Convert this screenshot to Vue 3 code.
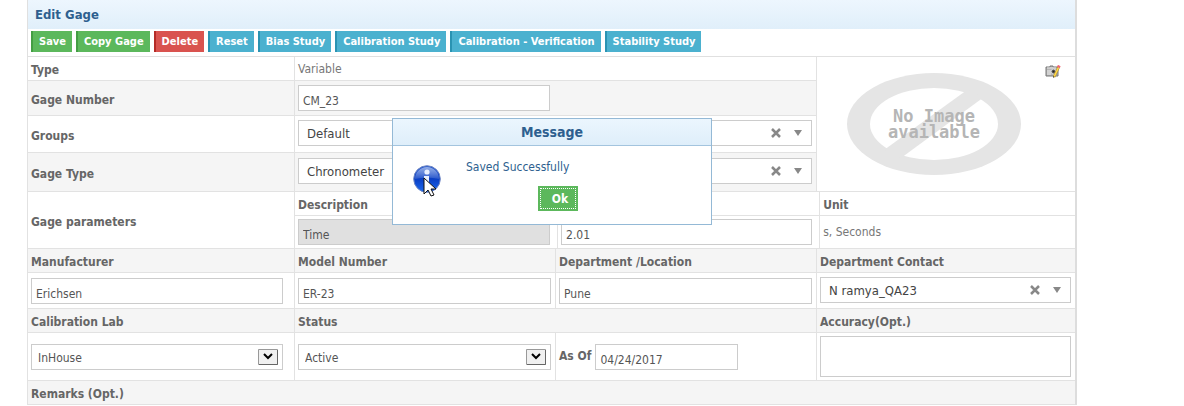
<script setup>
import { reactive, ref } from 'vue'

const actions = [
  { label: 'Save', kind: 'green' },
  { label: 'Copy Gage', kind: 'green' },
  { label: 'Delete', kind: 'red' },
  { label: 'Reset', kind: 'blue' },
  { label: 'Bias Study', kind: 'blue' },
  { label: 'Calibration Study', kind: 'blue' },
  { label: 'Calibration - Verification', kind: 'blue' },
  { label: 'Stability Study', kind: 'blue' }
]

const gage = reactive({
  number: 'CM_23',
  group: 'Default',
  type: 'Chronometer',
  parameter: 'Time',
  value: '2.01',
  manufacturer: 'Erichsen',
  model: 'ER-23',
  department: 'Pune',
  contact: 'N ramya_QA23',
  lab: 'InHouse',
  status: 'Active',
  asOf: '04/24/2017',
  accuracy: ''
})

const showMessage = ref(true)
</script>

<template>
  <main class="page">
    <form class="panel" @submit.prevent>
      <h1 class="title">Edit Gage</h1>

      <div class="toolbar">
        <button v-for="a in actions" :key="a.label" type="button" class="btn" :class="a.kind">{{ a.label }}</button>
      </div>

      <div class="grid">
        <div class="cell label"><span>Type</span></div>
        <div class="cell span2 top">Variable</div>
        <div class="cell photo">
          <svg class="no-image" viewBox="0 0 174 102" role="img">
            <ellipse cx="87" cy="51" rx="87" ry="51" fill="#e5e5e5" />
            <ellipse cx="87" cy="51" rx="64" ry="36" fill="#fff" />
            <path d="M120 17 37 77l17 8 83-61z" fill="#e5e5e5" />
            <text text-anchor="middle"><tspan x="87" y="49">No Image</tspan><tspan x="87" y="65">available</tspan></text>
          </svg>
          <button type="button" class="camera">
            <svg viewBox="0 0 16 14" width="16" height="14">
              <path d="M1 2h4V1h3v1h5v9H1z" fill="#b5b5b5" stroke="#777" />
              <path d="M2 3h9" stroke="#e8e8e8" />
              <path d="M3 5v5M5 5v5" stroke="#eee" />
              <circle cx="8.500" cy="6.500" r="2.500" fill="#666" stroke="#ddd" />
              <circle cx="8.500" cy="6.500" r="1" fill="#222" />
              <path d="M14 1.500 9 12" stroke="#a8862c" stroke-width="2.500" />
              <path d="M14 1.500 9 12" stroke="#ffd948" stroke-width="1.600" />
              <path d="m13.300 2.500 1-2" stroke="#ef6876" stroke-width="3" />
              <path d="m8 13 .300-2 1.400.700z" fill="#333" />
            </svg>
          </button>
        </div>

        <div class="cell label shade"><label for="number">Gage Number</label></div>
        <div class="cell span2 shade number"><input id="number" v-model="gage.number" class="field half" type="text"></div>

        <div class="cell label"><label for="group">Groups</label></div>
        <div class="cell span2 group">
          <div class="combo">
            <select id="group" v-model="gage.group"><option>Default</option></select>
            <button type="button" class="clear"><svg viewBox="0 0 10 10"><path d="m1 1 8 8M9 1 1 9" /></svg></button>
            <svg class="caret" viewBox="0 0 8 6"><path d="M0 0h8L4 6z" /></svg>
          </div>
        </div>

        <div class="cell label shade"><label for="type">Gage Type</label></div>
        <div class="cell span2 shade type">
          <div class="combo">
            <select id="type" v-model="gage.type"><option>Chronometer</option></select>
            <button type="button" class="clear"><svg viewBox="0 0 10 10"><path d="m1 1 8 8M9 1 1 9" /></svg></button>
            <svg class="caret" viewBox="0 0 8 6"><path d="M0 0h8L4 6z" /></svg>
          </div>
        </div>

        <div class="cell label"><span>Gage parameters</span></div>
        <div class="cell span3 params">
          <table>
            <thead>
              <tr>
                <th id="description">Description</th>
                <td></td>
                <th>Unit</th>
              </tr>
            </thead>
            <tbody>
              <tr>
                <td><input v-model="gage.parameter" class="field" type="text" aria-labelledby="description" disabled></td>
                <td><input v-model="gage.value" class="field" type="text"></td>
                <td>s, Seconds</td>
              </tr>
            </tbody>
          </table>
        </div>

        <div class="cell label shade"><label for="manufacturer">Manufacturer</label></div>
        <div class="cell label shade"><label for="model">Model Number</label></div>
        <div class="cell label shade"><label for="department">Department /Location</label></div>
        <div class="cell label shade"><label for="contact">Department Contact</label></div>

        <div class="cell first maker"><input id="manufacturer" v-model="gage.manufacturer" class="field" type="text"></div>
        <div class="cell maker"><input id="model" v-model="gage.model" class="field" type="text"></div>
        <div class="cell maker"><input id="department" v-model="gage.department" class="field" type="text"></div>
        <div class="cell contact">
          <div class="combo">
            <select id="contact" v-model="gage.contact"><option>N ramya_QA23</option></select>
            <button type="button" class="clear"><svg viewBox="0 0 10 10"><path d="m1 1 8 8M9 1 1 9" /></svg></button>
            <svg class="caret" viewBox="0 0 8 6"><path d="M0 0h8L4 6z" /></svg>
          </div>
        </div>

        <div class="cell label shade"><label for="lab">Calibration Lab</label></div>
        <div class="cell label shade span2"><label for="status">Status</label></div>
        <div class="cell label shade"><label for="accuracy">Accuracy(Opt.)</label></div>

        <div class="cell first status">
          <div class="drop">
            <select id="lab" v-model="gage.lab"><option>InHouse</option></select>
            <svg class="arrow" viewBox="0 0 20 16"><path class="box" d="M.500.500h19v15H.500z" /><path class="shadow" d="M1 15.500h18.500V1" /><path class="tick" d="m6 5 4 4 4-4" /></svg>
          </div>
        </div>
        <div class="cell status">
          <div class="drop">
            <select id="status" v-model="gage.status"><option>Active</option></select>
            <svg class="arrow" viewBox="0 0 20 16"><path class="box" d="M.500.500h19v15H.500z" /><path class="shadow" d="M1 15.500h18.500V1" /><path class="tick" d="m6 5 4 4 4-4" /></svg>
          </div>
        </div>
        <div class="cell status as-of">
          <label for="asof">As Of</label>
          <input id="asof" v-model="gage.asOf" class="field" type="text">
        </div>
        <div class="cell accuracy"><textarea id="accuracy" v-model="gage.accuracy"></textarea></div>

        <div class="cell label shade span4"><span>Remarks (Opt.)</span></div>
      </div>

      <section v-if="showMessage" class="message" role="dialog" aria-labelledby="message-title">
        <h2 id="message-title">Message</h2>
        <div class="message-body">
          <svg class="info" viewBox="0 0 30 34">
            <defs>
              <linearGradient id="ball" x1="0" y1="0" x2="0" y2="1">
                <stop offset="0" stop-color="#2c5fd0" />
                <stop offset=".5" stop-color="#0b3fc4" />
                <stop offset="1" stop-color="#1c6af0" />
              </linearGradient>
              <linearGradient id="gloss" x1="0" y1="0" x2="0" y2="1">
                <stop offset="0" stop-color="#fff" stop-opacity=".5" />
                <stop offset="1" stop-color="#fff" stop-opacity=".12" />
              </linearGradient>
            </defs>
            <circle cx="14" cy="14" r="13.300" fill="url(#ball)" stroke="#6f86c2" />
            <path d="M2 14a12 12 0 0 1 24 0Q14 11 2 14z" fill="url(#gloss)" />
            <circle cx="14" cy="7" r="2.600" fill="#e9f0ff" />
            <path d="M11 11h5v10h2v2h-7v-2h1v-8h-1z" fill="#e9f0ff" />
            <path d="M11 13v16l4-4 3 6 3-1-3-6h5z" fill="#fff" stroke="#111" />
          </svg>
          <div class="message-main">
            <p>Saved Successfully</p>
            <button type="button" class="ok" @click="showMessage = false">Ok</button>
          </div>
        </div>
      </section>
    </form>
  </main>
</template>

<style>
body {
  background: #fff;
  overflow: hidden;
}
</style>

<style scoped>
* {
  box-sizing: border-box;
}

.page {
  padding: 0 107px 0 27px;
  font: 12px/20px "DejaVu Sans Condensed", "DejaVu Sans", sans-serif;
  color: #777;
}

input,
select,
textarea,
button {
  font: inherit;
}

.panel {
  position: relative;
  border-right: 2px solid #ddd;
}

.title {
  margin: 0;
  padding: 5px 7px 4px;
  font-size: 13px;
  line-height: 20px;
  color: #2e5f8f;
  background: linear-gradient(#edf6fe, #e0effa);
  border-left: 1px solid #e0e0e0;
}

.toolbar {
  display: flex;
  gap: 4px;
  padding: 2px 3px 4px;
  border-left: 1px solid #e0e0e0;
  border-bottom: 1px solid #e0e0e0;
}

.btn {
  height: 21px;
  padding: 0 6px;
  border: 0;
  border-left: 2px solid;
  font-size: 11px;
  font-weight: bold;
  line-height: 21px;
  white-space: nowrap;
  color: #fff;
}

.btn.green {
  background: #5cb85c;
  border-color: #449d44;
}

.btn.red {
  background: #d9534f;
  border-color: #b52b27;
}

.btn.blue {
  background: #4bb1cf;
  border-color: #2a93b2;
}

.grid {
  display: grid;
  grid-template-columns: 267fr 261fr 261fr 259fr;
}

.cell {
  min-width: 0;
  padding: 0 4px 0 3px;
  border-left: 1px solid #e2e2e2;
  border-bottom: 1px solid #e2e2e2;
}

.label {
  display: flex;
  align-items: center;
  padding-top: 3px;
  font-weight: bold;
  color: #666;
}

.shade {
  background: #f5f5f5;
}

.span2 {
  grid-column: span 2;
}

.span3 {
  grid-column: span 3;
}

.span4 {
  grid-column: span 4;
}

.top {
  padding-top: 2px;
}

.field {
  display: block;
  width: 100%;
  height: 26px;
  padding: 6px 4px 0;
  border: 1px solid #ccc;
  background: #fff;
  color: #555;
}

.field:disabled {
  background: #e0e0e0;
}

.half {
  width: calc(50% - 5px);
}

.number {
  padding-top: 4px;
  padding-bottom: 4px;
}

.group {
  padding-top: 4px;
  padding-bottom: 6px;
}

.type {
  padding-top: 5px;
  padding-bottom: 7px;
}

.combo,
.drop {
  display: flex;
  align-items: center;
  height: 26px;
  border: 1px solid #ccc;
  background: #fff;
}

.combo select,
.drop select {
  flex: 1;
  min-width: 0;
  padding: 0 8px;
  border: 0;
  appearance: none;
  background: none;
  color: #444;
}

.combo select {
  padding-top: 2px;
  font-size: 13px;
}

.drop select {
  padding: 2px 6px 0;
  color: #555;
}

.clear {
  width: 10px;
  height: 10px;
  padding: 0;
  border: 0;
  background: none;
}

.clear svg {
  display: block;
  stroke: #888;
  stroke-width: 2.500;
}

.caret {
  width: 8px;
  height: 6px;
  margin: 0 9px 0 13px;
  fill: #888;
}

.arrow {
  width: 20px;
  height: 16px;
  margin-right: 4px;
  fill: none;
}

.arrow .box {
  fill: #f0f0f0;
  stroke: #999;
}

.arrow .shadow {
  stroke: #666;
}

.arrow .tick {
  stroke: #000;
  stroke-width: 2;
}

.photo {
  display: flex;
  align-items: flex-start;
  justify-content: space-between;
  grid-row: span 4;
  padding: 16px 14px 0 30px;
}

.no-image {
  width: 174px;
  height: 102px;
  font: bold 17px "DejaVu Sans Mono", monospace;
  fill: #b5b5b5;
}

.camera {
  height: 14px;
  margin-top: -8px;
  padding: 0;
  border: 0;
  background: none;
}

.camera svg {
  display: block;
}

.params {
  padding: 0;
}

table {
  width: 100%;
  table-layout: fixed;
  border-collapse: separate;
  border-spacing: 0;
}

th,
td {
  width: 33.6%;
  padding: 3px 7px 3px 3px;
  border-left: 1px solid #e2e2e2;
  text-align: left;
}

th:last-child,
td:last-child {
  width: auto;
}

th:first-child,
td:first-child {
  border-left: 0;
}

thead th,
thead td {
  padding-top: 3px;
  padding-bottom: 0;
  border-bottom: 1px solid #e2e2e2;
  color: #666;
}

.first {
  padding-right: 11px;
}

.maker {
  padding-top: 5px;
  padding-bottom: 4px;
}

.contact {
  padding-top: 4px;
}

.status {
  padding-top: 11px;
}

.as-of {
  display: flex;
  align-items: flex-start;
  gap: 4px;
}

.as-of label {
  padding-top: 2px;
  font-weight: bold;
  color: #666;
}

.as-of .field {
  width: 143px;
}

.accuracy {
  padding-top: 3px;
  padding-bottom: 3px;
}

textarea {
  display: block;
  width: 100%;
  height: 41px;
  border: 1px solid #ccc;
  resize: none;
}

.message {
  position: absolute;
  top: 118px;
  left: 2px;
  right: 0;
  width: 320px;
  margin: 0 auto;
  border: 1px solid #94b9d6;
  background: #fff;
}

.message h2 {
  margin: 0;
  padding: 3px 0;
  border-bottom: 1px solid #a3c4de;
  font-size: 14px;
  line-height: 20px;
  text-align: center;
  color: #2e5f8f;
  background: linear-gradient(#ebf6fe, #deeefa);
}

.message-body {
  display: flex;
  gap: 23px;
  padding: 11px 20px 13px;
}

.info {
  width: 30px;
  height: 34px;
  margin-top: 8px;
}

.message-main p {
  margin: 0 0 9px;
  color: #2e5f8f;
}

.ok {
  display: block;
  width: 40px;
  height: 25px;
  margin-left: 72px;
  padding: 0 0 0 4px;
  border: 0;
  outline: 1px dotted #fff;
  outline-offset: -3px;
  background: #5cb85c;
  font-weight: bold;
  color: #fff;
}
</style>
